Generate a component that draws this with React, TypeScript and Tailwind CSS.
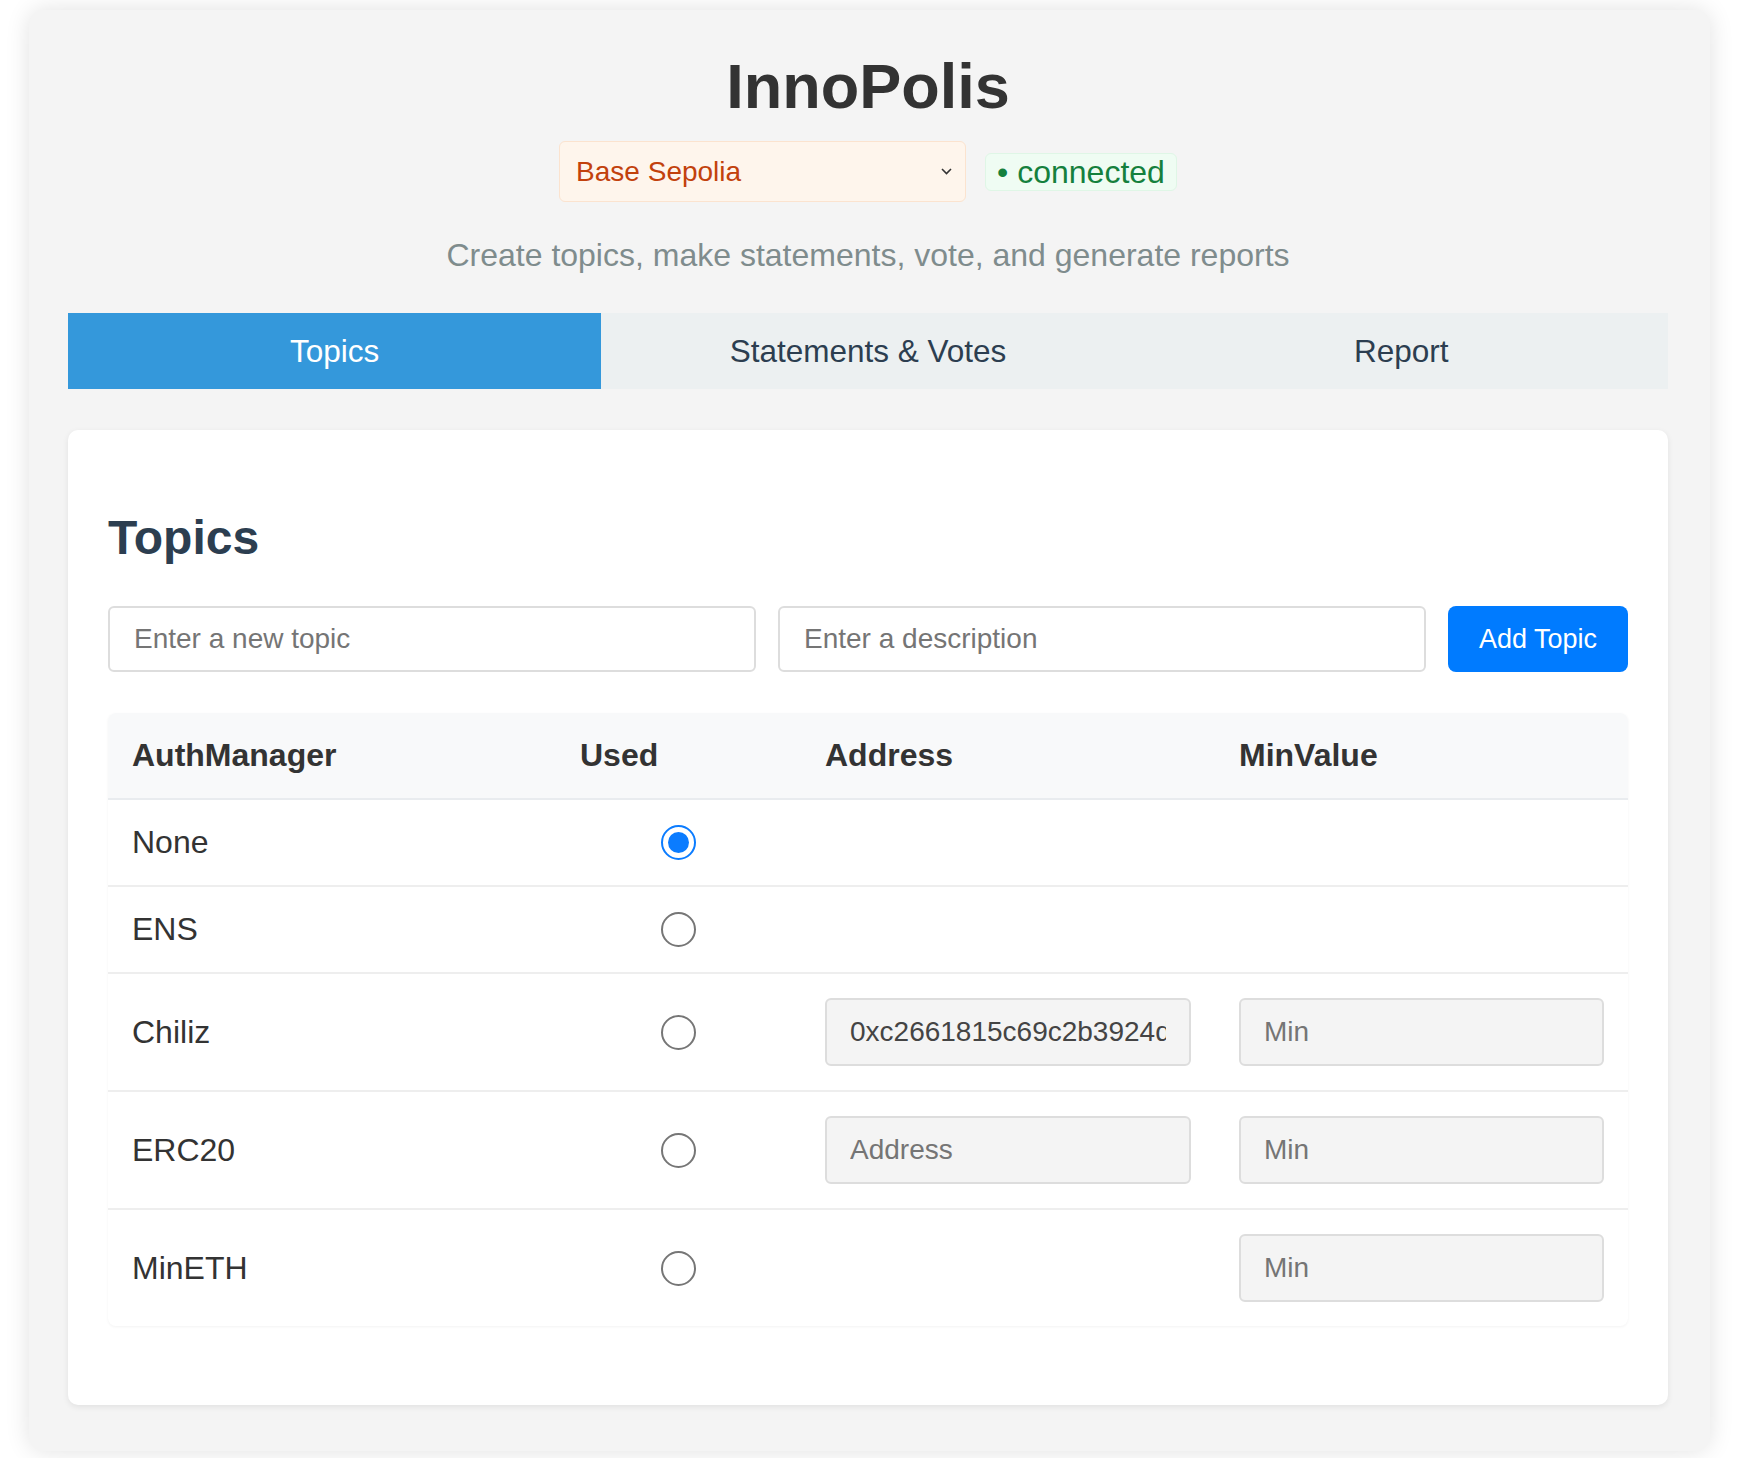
import { useState } from 'react';

type AuthRow = {
  name: string;
  address?: string;
  hasAddress?: boolean;
  hasMin?: boolean;
};

const authRows: AuthRow[] = [
  { name: 'None' },
  { name: 'ENS' },
  { name: 'Chiliz', address: '0xc2661815c69c2b3924d3dd0c2c1358a1e38a3105', hasAddress: true, hasMin: true },
  { name: 'ERC20', hasAddress: true, hasMin: true },
  { name: 'MinETH', hasMin: true },
];

const tabs = ['Topics', 'Statements & Votes', 'Report'];

function Radio({ checked, onClick }: { checked: boolean; onClick: () => void }) {
  if (checked) {
    return (
      <span
        onClick={onClick}
        className="flex w-[35px] h-[35px] rounded-full border-[2.5px] border-[#0b7cff] items-center justify-center cursor-pointer"
      >
        <span className="w-[21px] h-[21px] rounded-full bg-[#0b7cff]" />
      </span>
    );
  }
  return (
    <span
      onClick={onClick}
      className="block w-[35px] h-[35px] rounded-full border-2 border-[#767676] bg-white cursor-pointer"
    />
  );
}

export default function App() {
  const [activeTab, setActiveTab] = useState(0);
  const [used, setUsed] = useState(0);

  return (
    <div className="min-h-screen bg-white pt-[10px] pl-[29px] font-['Liberation_Sans',Arial,sans-serif]">
      <div className="w-[1681px] bg-[#f4f4f4] rounded-[16px] shadow-[0_0_24px_rgba(0,0,0,0.12)] pt-[40px] pl-[39px] pr-[42px] pb-[46px]">
        {/* Header */}
        <h1 className="text-center text-[63px] leading-[72px] font-bold text-[#333333]">InnoPolis</h1>
        <div className="flex justify-center items-center gap-[19px] mt-[19px]">
          <div className="flex items-center justify-between w-[407px] h-[61px] pl-[16px] pr-[13px] bg-[#fef5ec] border border-[#fbe3cf] rounded-[6px] text-[28px] text-[#c2410c]">
            <span>Base Sepolia</span>
            <svg width="11" height="7" viewBox="0 0 11 7" fill="none">
              <path d="M1 1l4.5 4.5L10 1" stroke="#333" strokeWidth="1.6" />
            </svg>
          </div>
          <div className="h-[38px] flex items-center px-[11px] bg-[#effcf3] border border-[#dff6e6] rounded-[6px] text-[32px] leading-[36px] text-[#15803d]">
            • connected
          </div>
        </div>
        <p className="mt-[35px] text-center text-[32px] leading-[37px] text-[#7f8c8d]">
          Create topics, make statements, vote, and generate reports
        </p>

        {/* Tabs */}
        <div className="mt-[39px] grid grid-cols-3">
          {tabs.map((t, i) => (
            <button
              key={t}
              onClick={() => setActiveTab(i)}
              className={`py-[20px] text-[31.5px] leading-[36px] ${
                activeTab === i ? 'bg-[#3498db] text-white' : 'bg-[#ecf0f1] text-[#2c3e50]'
              }`}
            >
              {t}
            </button>
          ))}
        </div>

        {/* Card */}
        <div className="mt-[41px] bg-white rounded-[10px] shadow-[0_2px_6px_rgba(0,0,0,0.08)] p-[40px]">
          <h2 className="mt-[40px] text-[48px] leading-[55px] font-bold text-[#2c3e50]">Topics</h2>

          <div className="mt-[41px] flex gap-[22px]">
            <input
              placeholder="Enter a new topic"
              className="flex-1 min-w-0 h-[66px] px-[24px] border-2 border-[#dddddd] rounded-[6px] bg-white text-[28px] text-[#333] placeholder:text-[#757575] outline-none"
            />
            <input
              placeholder="Enter a description"
              className="flex-1 min-w-0 h-[66px] px-[24px] border-2 border-[#dddddd] rounded-[6px] bg-white text-[28px] text-[#333] placeholder:text-[#757575] outline-none"
            />
            <button className="w-[180px] h-[66px] bg-[#007bff] rounded-[8px] text-white text-[27px]">Add Topic</button>
          </div>

          <div className="mt-[41px] mb-[39px] rounded-[8px] overflow-hidden shadow-[0_1px_3px_rgba(0,0,0,0.05)]">
            <table className="w-full table-fixed text-[32px] text-[#333333]">
              <colgroup>
                <col className="w-[448px]" />
                <col className="w-[245px]" />
                <col className="w-[414px]" />
                <col />
              </colgroup>
              <thead>
                <tr className="bg-[#f8f9fa] border-b-2 border-[#e9ecef]">
                  <th className="px-[24px] py-[24px] leading-[37px] text-left font-bold">AuthManager</th>
                  <th className="px-[24px] py-[24px] leading-[37px] text-left font-bold">Used</th>
                  <th className="px-[24px] py-[24px] leading-[37px] text-left font-bold">Address</th>
                  <th className="px-[24px] py-[24px] leading-[37px] text-left font-bold">MinValue</th>
                </tr>
              </thead>
              <tbody>
                {authRows.map((r, i) => (
                  <tr key={r.name} className={i < authRows.length - 1 ? 'border-b-2 border-[#eeeeee]' : ''}>
                    <td className="px-[24px] py-[24px] leading-[37px]">{r.name}</td>
                    <td className="px-[24px] py-[24px]">
                      <div className="flex justify-center items-center h-[37px]">
                        <Radio checked={used === i} onClick={() => setUsed(i)} />
                      </div>
                    </td>
                    <td className="px-[24px] py-[24px]">
                      {r.hasAddress && (
                        <input
                          defaultValue={r.address}
                          placeholder="Address"
                          className="block w-full h-[68px] px-[23px] border-2 border-[#dddddd] rounded-[6px] bg-[#f4f4f4] text-[28px] text-[#444] placeholder:text-[#757575] outline-none"
                        />
                      )}
                    </td>
                    <td className="px-[24px] py-[24px]">
                      {r.hasMin && (
                        <input
                          placeholder="Min"
                          className="block w-full h-[68px] px-[23px] border-2 border-[#dddddd] rounded-[6px] bg-[#f4f4f4] text-[28px] text-[#444] placeholder:text-[#757575] outline-none"
                        />
                      )}
                    </td>
                  </tr>
                ))}
              </tbody>
            </table>
          </div>
        </div>
      </div>
    </div>
  );
}
